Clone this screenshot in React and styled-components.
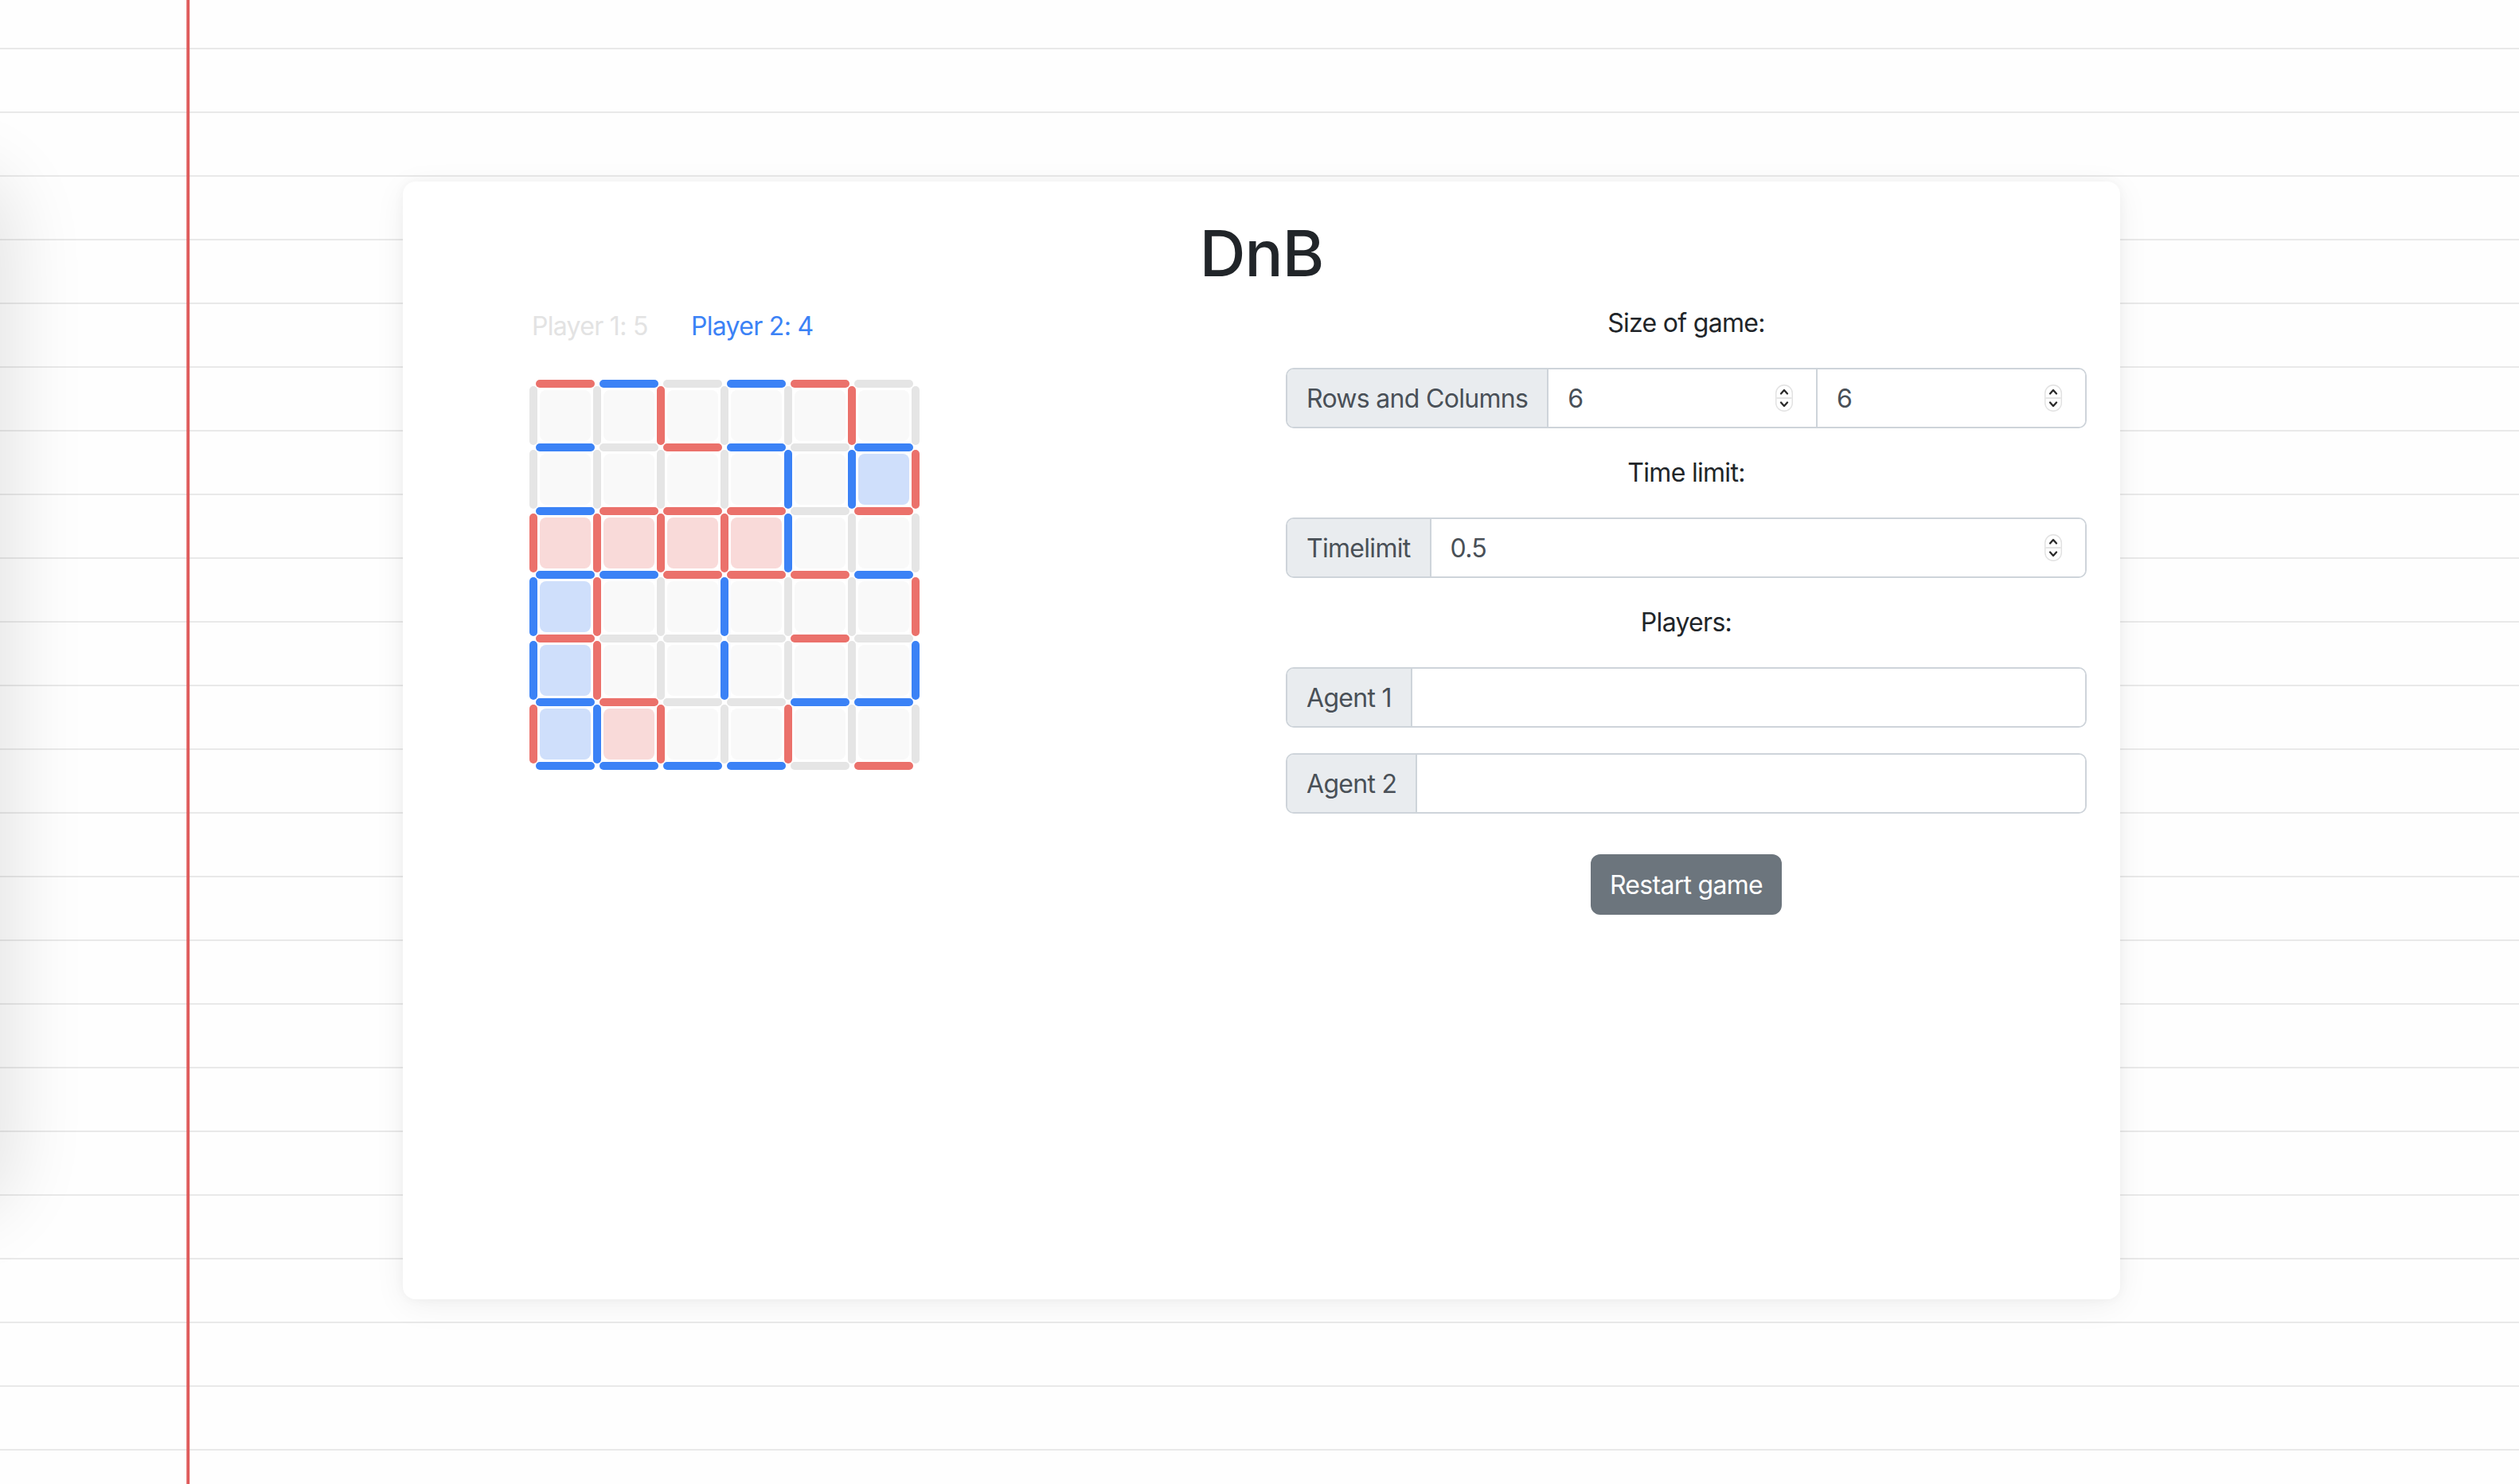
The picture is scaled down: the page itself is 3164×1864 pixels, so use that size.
import styled, { createGlobalStyle } from "styled-components"

const GlobalStyle = createGlobalStyle`
  html, body {
    margin: 0;
    padding: 0;
  }
  body {
    font-family: Inter, "Liberation Sans", sans-serif;
    color: #212529;
  }
  * {
    box-sizing: border-box;
  }
`

const Page = styled.div`
  position: relative;
  width: 3164px;
  height: 1864px;
  overflow: hidden;
  padding: 228px 0 0 506px;
  background-color: #fefefe;
  background-image:
    linear-gradient(90deg, transparent 234px, rgba(224, 90, 90, 0.45) 234px, #df5b5b 235px, #df5b5b 238px, rgba(224, 90, 90, 0.35) 238px, transparent 239px),
    repeating-linear-gradient(180deg, transparent 0, transparent 60px, #e9e9e9 60px, #e9e9e9 62px, transparent 62px, transparent 80px);
`

// soft shade coming from a sheet that sits off the left edge
const SideShade = styled.div`
  position: absolute;
  left: -120px;
  top: 230px;
  width: 120px;
  height: 1280px;
  border-radius: 60px;
  box-shadow: 0 0 90px 20px rgba(0, 0, 0, 0.1);
`

const Card = styled.div`
  width: 2157px;
  height: 1404px;
  background: #fff;
  border-radius: 16px;
  box-shadow: 0 8px 40px rgba(0, 0, 0, 0.06), 0 0 14px rgba(0, 0, 0, 0.04);
  padding-top: 42px;
  letter-spacing: -0.7px;
`

const Title = styled.h1`
  margin: 0 0 16px;
  text-align: center;
  font-size: 80px;
  line-height: 96px;
  font-weight: 500;
  letter-spacing: -1px;
  color: #212529;
`

const Row = styled.div`
  display: grid;
  grid-template-columns: 1fr 1006px;
  padding: 0 42px 0 159px;
`

const LeftCol = styled.div`
  padding-top: 4px;
`

const Scores = styled.div`
  display: flex;
  padding-left: 3px;
`

const Score = styled.span`
  width: 200px;
  font-size: 32px;
  line-height: 48px;
  color: ${(p) => (p.$active ? "#3b82f6" : "#e3e3e3")};
`

const Board = styled.div`
  display: grid;
  grid-template-columns: repeat(6, 10px 70px) 10px;
  grid-template-rows: repeat(6, 10px 70px) 10px;
  width: 490px;
  margin-top: 43px;
`

const edgeColors = { r: "#eb716b", b: "#3b82f6", g: "#e5e5e5" }
const cellColors = { r: "#f9dad9", b: "#cfdffb", n: "#f9f9f9" }

const Dot = styled.span``

const HEdge = styled.span`
  margin: 0 -2px;
  border-radius: 5px;
  background: ${(p) => edgeColors[p.$tone]};
  position: relative;
`

const VEdge = styled.span`
  margin: -2px 0;
  border-radius: 5px;
  background: ${(p) => edgeColors[p.$tone]};
  position: relative;
`

const Cell = styled.span`
  margin: 3px;
  border-radius: 8px;
  background: ${(p) => cellColors[p.$tone]};
`

const RightCol = styled.div`
  display: flex;
  flex-direction: column;
  align-items: center;
  gap: 32px;
`

const Label = styled.div`
  font-size: 32px;
  line-height: 48px;
  color: #212529;
`

const InputGroup = styled.div`
  display: flex;
  width: 100%;
  height: 76px;
  border: 2px solid #ced4da;
  border-radius: 10px;
  overflow: hidden;
`

const Addon = styled.span`
  display: flex;
  align-items: center;
  flex: none;
  padding: 0 24px;
  background: #e9ecef;
  border-right: 2px solid #ced4da;
  font-size: 32px;
  color: #495057;
  white-space: nowrap;
`

const Field = styled.div`
  flex: 1 1 0;
  min-width: 0;
  display: flex;
  align-items: center;
  padding: 0 29px 0 24px;
  background: #fff;
  & + & {
    border-left: 2px solid #ced4da;
  }
`

const FieldInput = styled.input`
  flex: 1 1 0;
  min-width: 0;
  width: 0;
  border: 0;
  outline: none;
  padding: 0;
  background: transparent;
  font-family: inherit;
  font-size: 32px;
  letter-spacing: -0.7px;
  color: #495057;
`

const Button = styled.button`
  margin-top: 19px;
  height: 76px;
  padding: 0 24px;
  border: 0;
  border-radius: 12px;
  background: #6c757d;
  color: #fff;
  font-family: inherit;
  font-size: 32px;
  letter-spacing: -0.7px;
`

const Spinner = () => (
  <svg width="22" height="34" viewBox="0 0 22 34">
    <rect x="0.75" y="0.75" width="20.5" height="32.5" rx="10" fill="#fff" stroke="#e2e2e2" strokeWidth="1.5" />
    <line x1="1.5" y1="17" x2="20.5" y2="17" stroke="#dcdcdc" strokeWidth="1.5" />
    <polyline points="7,11.5 11,7 15,11.5" fill="none" stroke="#2b2b2b" strokeWidth="2.3" strokeLinecap="round" strokeLinejoin="round" />
    <polyline points="7,22.5 11,27 15,22.5" fill="none" stroke="#2b2b2b" strokeWidth="2.3" strokeLinecap="round" strokeLinejoin="round" />
  </svg>
)

const game = {
  h: ["rbgbrg", "bgrbgb", "brrrgr", "bbrrrb", "rgggrg", "brggbb", "bbbbgr"],
  v: ["ggrggrg", "ggggbbr", "rrrrbgg", "brgbggr", "brgbggb", "rbrgrgg"],
  c: ["nnnnnn", "nnnnnb", "rrrrnn", "bnnnnn", "bnnnnn", "brnnnn"],
}

function GameBoard() {
  const items = []
  for (let r = 0; r < 13; r++) {
    for (let c = 0; c < 13; c++) {
      const key = r + "-" + c
      if (r % 2 === 0 && c % 2 === 0) items.push(<Dot key={key} />)
      else if (r % 2 === 0) items.push(<HEdge key={key} $tone={game.h[r / 2][(c - 1) / 2]} />)
      else if (c % 2 === 0) items.push(<VEdge key={key} $tone={game.v[(r - 1) / 2][c / 2]} />)
      else items.push(<Cell key={key} $tone={game.c[(r - 1) / 2][(c - 1) / 2]} />)
    }
  }
  return <Board>{items}</Board>
}

export default function App() {
  return (
    <Page>
      <GlobalStyle />
      <SideShade />
      <Card>
        <Title>DnB</Title>
        <Row>
          <LeftCol>
            <Scores>
              <Score>Player 1: 5</Score>
              <Score $active>Player 2: 4</Score>
            </Scores>
            <GameBoard />
          </LeftCol>
          <RightCol>
            <Label>Size of game:</Label>
            <InputGroup>
              <Addon>Rows and Columns</Addon>
              <Field>
                <FieldInput defaultValue="6" />
                <Spinner />
              </Field>
              <Field>
                <FieldInput defaultValue="6" />
                <Spinner />
              </Field>
            </InputGroup>
            <Label>Time limit:</Label>
            <InputGroup>
              <Addon>Timelimit</Addon>
              <Field>
                <FieldInput defaultValue="0.5" />
                <Spinner />
              </Field>
            </InputGroup>
            <Label>Players:</Label>
            <InputGroup>
              <Addon>Agent 1</Addon>
              <Field>
                <FieldInput />
              </Field>
            </InputGroup>
            <InputGroup>
              <Addon>Agent 2</Addon>
              <Field>
                <FieldInput />
              </Field>
            </InputGroup>
            <Button>Restart game</Button>
          </RightCol>
        </Row>
      </Card>
    </Page>
  )
}
